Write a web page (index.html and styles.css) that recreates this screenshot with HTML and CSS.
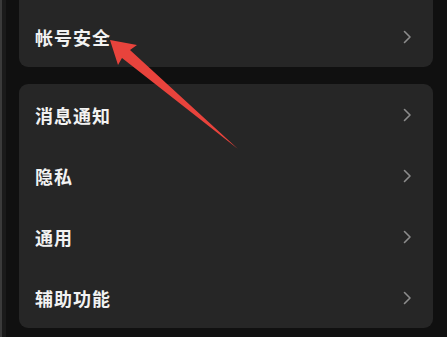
FILE: index.html
```html
<!DOCTYPE html>
<html lang="zh-CN">
<head>
<meta charset="utf-8">
<title>设置</title>
<link rel="stylesheet" href="styles.css">
</head>
<body>
<main class="page">
  <section class="card card-first">
    <div class="row"><span class="label">帐号安全</span><span class="chev"><svg width="9" height="14" viewBox="0 0 9 14"><path d="M1.5 1.5 L7 7 L1.5 12.5" fill="none" stroke="#8c8c8c" stroke-width="1.6" stroke-linecap="round" stroke-linejoin="round"/></svg></span></div>
  </section>
  <section class="card card-list">
    <div class="row"><span class="label">消息通知</span><span class="chev"><svg width="9" height="14" viewBox="0 0 9 14"><path d="M1.5 1.5 L7 7 L1.5 12.5" fill="none" stroke="#8c8c8c" stroke-width="1.6" stroke-linecap="round" stroke-linejoin="round"/></svg></span></div>
    <div class="row"><span class="label">隐私</span><span class="chev"><svg width="9" height="14" viewBox="0 0 9 14"><path d="M1.5 1.5 L7 7 L1.5 12.5" fill="none" stroke="#8c8c8c" stroke-width="1.6" stroke-linecap="round" stroke-linejoin="round"/></svg></span></div>
    <div class="row"><span class="label">通用</span><span class="chev"><svg width="9" height="14" viewBox="0 0 9 14"><path d="M1.5 1.5 L7 7 L1.5 12.5" fill="none" stroke="#8c8c8c" stroke-width="1.6" stroke-linecap="round" stroke-linejoin="round"/></svg></span></div>
    <div class="row"><span class="label">辅助功能</span><span class="chev"><svg width="9" height="14" viewBox="0 0 9 14"><path d="M1.5 1.5 L7 7 L1.5 12.5" fill="none" stroke="#8c8c8c" stroke-width="1.6" stroke-linecap="round" stroke-linejoin="round"/></svg></span></div>
  </section>
</main>
<svg class="arrow" width="447" height="337" viewBox="0 0 447 337">
  <polygon points="110,40 137,45 130,50 238,149 122,58 118,65" fill="#e8433c"/>
</svg>
</body>
</html>
```
FILE: styles.css
```css
html, body {
  margin: 0;
  padding: 0;
}
body {
  width: 447px;
  height: 337px;
  overflow: hidden;
  background: #101010;
  box-shadow: inset 2px 0 0 #3a3a3a, inset 6px 0 0 #1a1a1a;
  font-family: "Noto Sans CJK SC", "Noto Sans", sans-serif;
  position: relative;
}
.page {
  display: flex;
  flex-direction: column;
  gap: 17px;
  padding: 0 14px 0 19px;
}
.card {
  background: #262626;
  border-radius: 9px;
}
.card-first {
  margin-top: -20px;
  padding-top: 26px;
}
.card-list {
  padding-top: 1px;
}
.row {
  height: 61px;
  display: flex;
  align-items: center;
  justify-content: space-between;
  padding: 0 21px 0 16px;
}
.card-list .row {
  height: 60.75px;
}
.label {
  color: #f2f2f2;
  font-size: 18px;
  font-weight: 700;
  letter-spacing: 1px;
  line-height: 1;
}
.chev {
  display: flex;
  align-items: center;
}
.arrow {
  position: absolute;
  left: 0;
  top: 0;
  pointer-events: none;
}
```
